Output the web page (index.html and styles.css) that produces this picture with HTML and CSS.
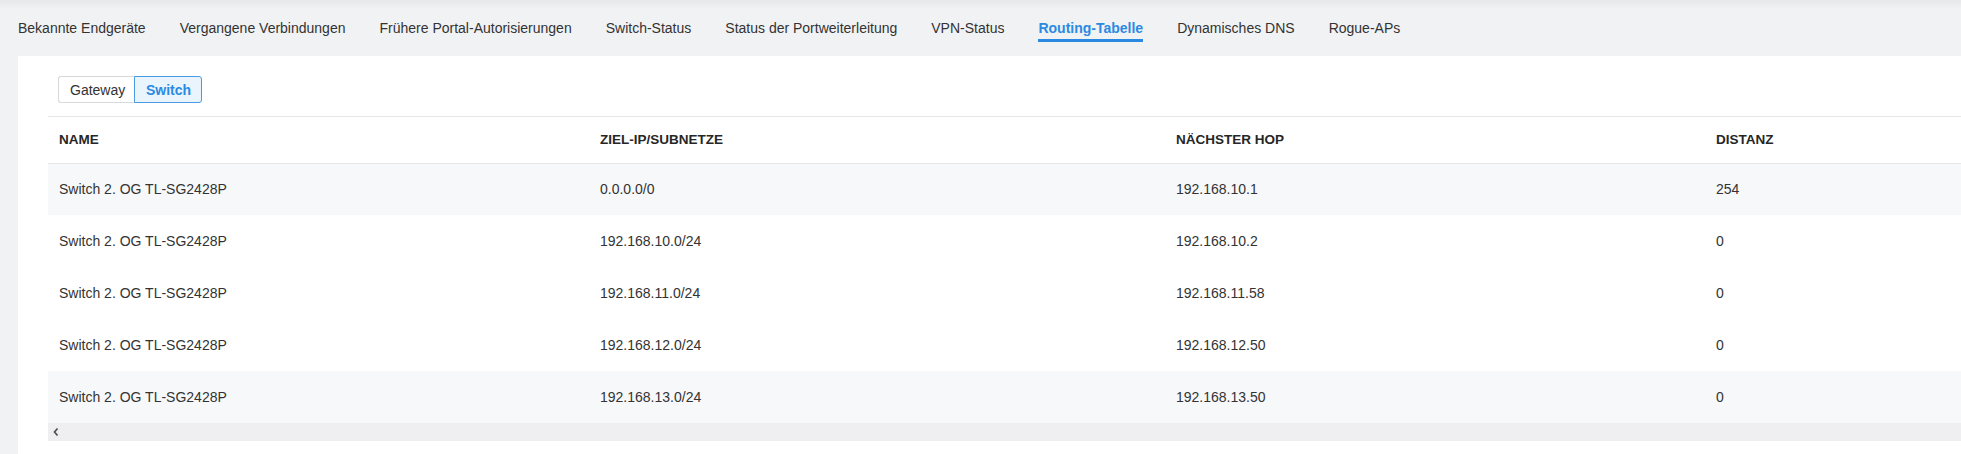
FILE: index.html
```html
<!DOCTYPE html>
<html lang="de">
<head>
<meta charset="utf-8">
<title>Routing-Tabelle</title>
<link rel="stylesheet" href="styles.css">
</head>
<body>
<nav class="tabs">
  <a class="tab">Bekannte Endgeräte</a>
  <a class="tab">Vergangene Verbindungen</a>
  <a class="tab">Frühere Portal-Autorisierungen</a>
  <a class="tab">Switch-Status</a>
  <a class="tab">Status der Portweiterleitung</a>
  <a class="tab">VPN-Status</a>
  <a class="tab tab-active">Routing-Tabelle</a>
  <a class="tab">Dynamisches DNS</a>
  <a class="tab">Rogue-APs</a>
</nav>
<main class="card">
  <div class="toolbar">
    <div class="seg">
      <button class="seg-btn">Gateway</button>
      <button class="seg-btn seg-active">Switch</button>
    </div>
  </div>
  <div class="table-wrap">
    <table class="routes">
      <colgroup>
        <col class="c1"><col class="c2"><col class="c3"><col class="c4"><col class="c5">
      </colgroup>
      <thead>
        <tr><th>NAME</th><th>ZIEL-IP/SUBNETZE</th><th>NÄCHSTER HOP</th><th>DISTANZ</th><th></th></tr>
      </thead>
      <tbody>
        <tr class="shaded"><td>Switch 2. OG TL-SG2428P</td><td>0.0.0.0/0</td><td>192.168.10.1</td><td>254</td><td></td></tr>
        <tr><td>Switch 2. OG TL-SG2428P</td><td>192.168.10.0/24</td><td>192.168.10.2</td><td>0</td><td></td></tr>
        <tr><td>Switch 2. OG TL-SG2428P</td><td>192.168.11.0/24</td><td>192.168.11.58</td><td>0</td><td></td></tr>
        <tr><td>Switch 2. OG TL-SG2428P</td><td>192.168.12.0/24</td><td>192.168.12.50</td><td>0</td><td></td></tr>
        <tr class="shaded"><td>Switch 2. OG TL-SG2428P</td><td>192.168.13.0/24</td><td>192.168.13.50</td><td>0</td><td></td></tr>
      </tbody>
    </table>
    <div class="hscroll">
      <svg class="arrow" width="8" height="10" viewBox="0 0 8 10"><path d="M5.5 1.5 L2.5 5 L5.5 8.5" fill="none" stroke="#505050" stroke-width="1.7"/></svg>
    </div>
  </div>
</main>
</body>
</html>
```

FILE: styles.css
```css
* { box-sizing: border-box; }
html, body { margin: 0; padding: 0; }
body {
  background: #f1f2f4;
  font-family: "Liberation Sans", Arial, sans-serif;
  color: #333;
  height: 454px;
  overflow: hidden;
  display: flex;
  flex-direction: column;
}
.tabs {
  height: 56px;
  flex: none;
  display: flex;
  align-items: flex-start;
  gap: 34px;
  padding-left: 18px;
  background: linear-gradient(#e7e8ea 0px, #f1f2f4 9px, #f1f2f4 100%);
}
.tab {
  font-size: 14px;
  line-height: 16px;
  padding-top: 20px;
  height: 41px;
  color: #333;
  white-space: nowrap;
  border-bottom: 2px solid transparent;
}
.tab-active {
  color: #2a8ae2;
  font-weight: bold;
  border-bottom: 3px solid #2a8ae2;
  height: 42px;
}
.card {
  flex: 1;
  margin-left: 18px;
  background: #fff;
  display: flex;
  flex-direction: column;
  min-width: 0;
}
.toolbar {
  padding: 20px 0 0 40px;
  height: 60px;
}
.seg { display: inline-flex; }
.seg-btn {
  font-family: inherit;
  font-size: 14px;
  height: 27px;
  padding: 0 11px;
  background: #fff;
  color: #333;
  border: 1px solid #d6d8dc;
  margin: 0;
  cursor: pointer;
}
.seg-btn:first-child { border-radius: 3px 0 0 3px; border-right: none; width: 76px; }
.seg-active {
  border-color: #4a9be0;
  background: #e9f4fd;
  color: #2a8ae2;
  font-weight: bold;
  border-radius: 0 3px 3px 0;
  width: 68px;
}
.table-wrap {
  margin-left: 30px;
  overflow: hidden;
  border-top: 1px solid #e6e7e9;
}
.routes {
  border-collapse: collapse;
  table-layout: fixed;
  width: 2400px;
}
.c1 { width: 541px; }
.c2 { width: 576px; }
.c3 { width: 540px; }
.c4 { width: 560px; }
.c5 { width: 183px; }
.routes th {
  height: 46px;
  text-align: left;
  font-size: 13.5px;
  font-weight: bold;
  color: #262626;
  padding: 0 0 0 11px;
  border-bottom: 1px solid #e6e7e9;
}
.routes td {
  height: 52px;
  font-size: 14px;
  color: #333;
  padding: 0 0 0 11px;
  white-space: nowrap;
}
.shaded td { background: #f7f8fa; }
.hscroll {
  height: 18px;
  background: #efeff1;
  display: flex;
  align-items: center;
  padding-left: 4px;
}
.arrow { display: block; }
```
